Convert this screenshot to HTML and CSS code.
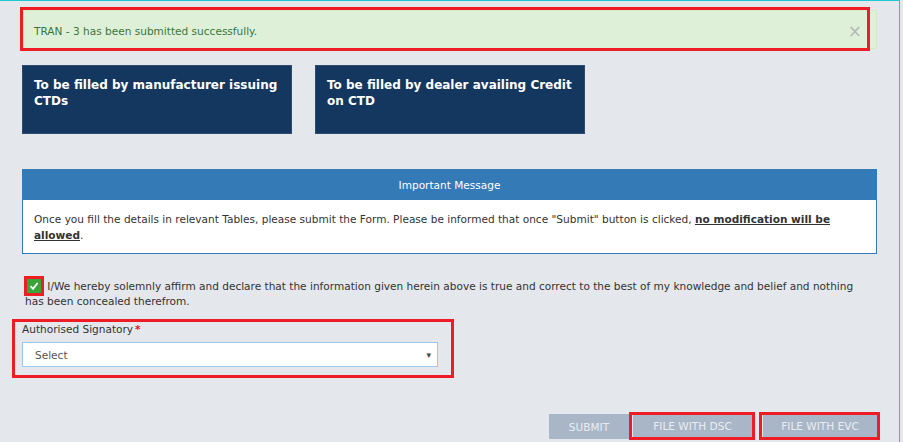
FILE: index.html
```html
<!DOCTYPE html>
<html>
<head>
<meta charset="utf-8">
<link rel="stylesheet" href="styles.css">
</head>
<body>
<div class="frame">
  <div class="content">
    <div class="alert">
      <span class="alert-text">TRAN - 3 has been submitted successfully.</span>
      <span class="alert-close">&times;</span>
      <span class="mark mark-alert"></span>
    </div>
    <div class="cards">
      <div class="card">To be filled by manufacturer issuing CTDs</div>
      <div class="card">To be filled by dealer availing Credit on CTD</div>
    </div>
    <div class="msg">
      <div class="msg-head">Important Message</div>
      <div class="msg-body">Once you fill the details in relevant Tables, please submit the Form. Please be informed that once "Submit" button is clicked, <b class="u">no modification will be allowed</b>.</div>
    </div>
    <p class="affirm"><span class="chk-frame"><span class="chk"><svg width="10" height="10" viewBox="0 0 10 10"><path d="M1.5 5.2 L4 7.8 L8.6 2" fill="none" stroke="#fff" stroke-width="1.8"/></svg></span></span> I/We hereby solemnly affirm and declare that the information given herein above is true and correct to the best of my knowledge and belief and nothing has been concealed therefrom.</p>
    <div class="sig">
      <div class="sig-label">Authorised Signatory<span class="req">*</span></div>
      <div class="select"><span>Select</span><span class="caret">&#9662;</span></div>
      <span class="mark mark-sig"></span>
    </div>
    <div class="actions">
      <span class="btn btn-submit">SUBMIT</span>
      <span class="btn btn-dsc">FILE WITH DSC<span class="mark mark-btn"></span></span>
      <span class="btn btn-evc">FILE WITH EVC<span class="mark mark-btn"></span></span>
    </div>
  </div>
</div>
</body>
</html>
```

FILE: styles.css
```css
html, body {
  margin: 0;
  padding: 0;
}
body {
  background: #e4e7eb;
  font-family: "DejaVu Sans", Verdana, sans-serif;
  font-size: 10.55px;
  color: #333;
}
.frame {
  width: 900px;
  height: 442px;
  box-sizing: border-box;
  border-top: 1px solid #1ec8d0;
  border-right: 1px solid #1ec8d0;
  overflow: hidden;
}
.content {
  padding: 0 22px 0 22px;
}
.mark {
  position: absolute;
  border: 3px solid #ee1c25;
  box-sizing: border-box;
  pointer-events: none;
}
.alert {
  position: relative;
  margin: 9px 0 0 1px;
  height: 39px;
  box-sizing: border-box;
  background: #dff0d8;
  border: 1px solid #d6e9c6;
  color: #3c763d;
  display: flex;
  align-items: center;
  padding: 0 0 0 10px;
}
.alert-text {
  flex: 1;
  margin-top: 2px;
}
.alert-close {
  color: #b3b9b2;
  font-size: 17px;
  font-family: "DejaVu Sans", sans-serif;
  margin-right: 14px;
  margin-top: 3px;
}
.mark-alert {
  left: -4px;
  top: -4px;
  right: 6px;
  bottom: -3px;
}
.cards {
  display: flex;
  gap: 23px;
  margin-top: 16px;
}
.card {
  width: 270px;
  height: 69px;
  box-sizing: border-box;
  background: #143760;
  border: 1px solid #2e4a6e;
  color: #fff;
  font-weight: bold;
  font-size: 12px;
  line-height: 16px;
  padding: 11px 11px;
}
.msg {
  margin-top: 35px;
  border: 1px solid #337ab7;
  background: #fff;
}
.msg-head {
  background: #337ab7;
  color: #fff;
  text-align: center;
  height: 30px;
  line-height: 30px;
}
.msg-body {
  padding: 11px 11px 10px 11px;
  line-height: 16px;
}
.u {
  text-decoration: underline;
}
.affirm {
  margin: 25px 0 0 0;
  padding: 0 20px 0 3px;
  line-height: 15px;
}
.chk-frame {
  display: inline-block;
  width: 20px;
  height: 20px;
  box-sizing: border-box;
  border: 3px solid #ee1c25;
  vertical-align: middle;
  margin: -3px 0 -3px -1px;
  position: relative;
  top: -1px;
}
.chk {
  display: flex;
  align-items: center;
  justify-content: center;
  width: 14px;
  height: 14px;
  background: #3aa537;
}
.sig {
  position: relative;
  width: 416px;
  margin-top: 13px;
}
.sig-label {
  line-height: 15px;
  color: #333;
}
.req {
  color: #e01a22;
  font-weight: bold;
  margin-left: 2px;
}
.select {
  margin-top: 5px;
  height: 25px;
  box-sizing: border-box;
  background: #fff;
  border: 1px solid #9cc8ef;
  display: flex;
  align-items: center;
  justify-content: space-between;
  padding: 0 6px 0 12px;
  color: #555;
}
.caret {
  font-size: 9px;
  color: #444;
}
.mark-sig {
  left: -10px;
  right: -16px;
  top: -3px;
  bottom: -11px;
}
.actions {
  display: flex;
  justify-content: flex-end;
  margin-top: 47px;
}
.btn {
  position: relative;
  display: inline-flex;
  align-items: center;
  justify-content: center;
  height: 24px;
  background: #a9b6c8;
  color: #e9edf2;
  font-size: 10.55px;
  box-sizing: border-box;
}
.btn-submit {
  width: 80px;
  height: 25px;
  margin-right: 4px;
}
.btn-dsc {
  width: 119px;
  margin-right: 11px;
}
.btn-evc {
  width: 114px;
}
.mark-btn {
  left: -4px;
  right: -3px;
  top: -2px;
  bottom: -2px;
}
```
